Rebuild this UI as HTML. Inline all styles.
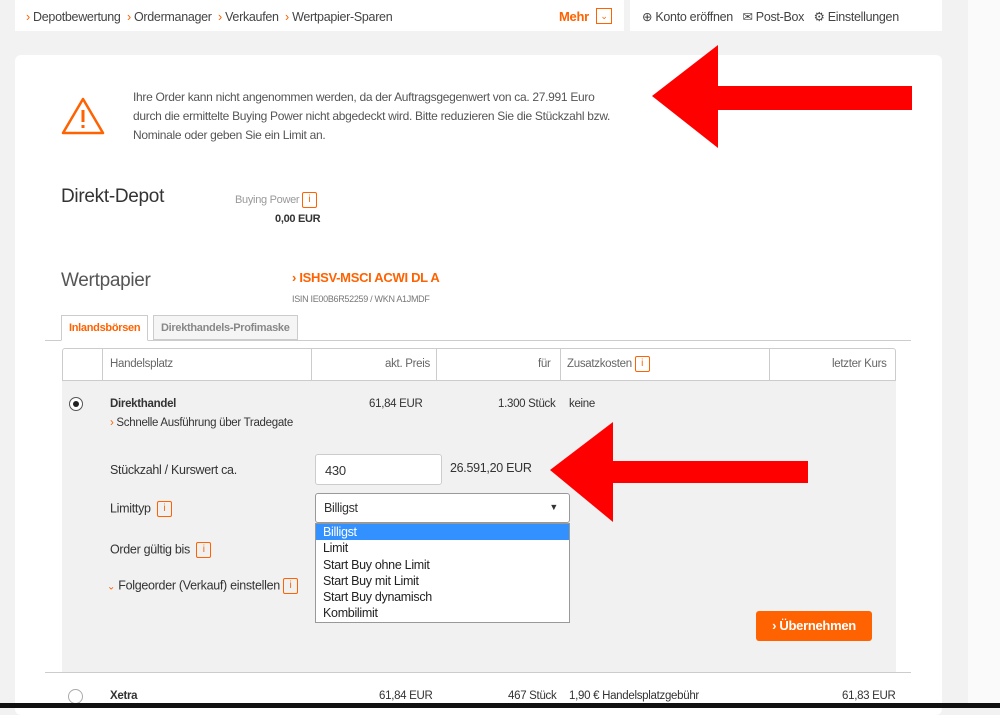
<!DOCTYPE html>
<html><head><meta charset="utf-8"><style>
*{margin:0;padding:0;box-sizing:border-box}
body{width:1000px;height:708px;overflow:hidden;background:#f2f2f2;font-family:"Liberation Sans",sans-serif;color:#333;position:relative;font-size:12px;letter-spacing:-0.3px}
.a{position:absolute;white-space:nowrap}
.o{color:#ff6200}
.i{display:inline-block;width:15px;height:16px;border:1px solid #ff6200;color:#ff6200;font-size:10px;line-height:14px;text-align:center;border-radius:2px;vertical-align:middle;letter-spacing:0}
</style></head><body>
<div class="a" style="left:968px;top:0;width:32px;height:708px;background:#fafafa"></div>
<div class="a" style="left:15px;top:0;width:609px;height:31px;background:#fff"></div>
<div class="a" style="left:630px;top:0;width:312px;height:31px;background:#fff"></div>
<div class="a" style="left:26px;top:10px;font-size:12.5px;color:#444"><span class="o">›</span> Depotbewertung &nbsp;<span class="o">›</span> Ordermanager &nbsp;<span class="o">›</span> Verkaufen &nbsp;<span class="o">›</span> Wertpapier-Sparen</div>
<div class="a o" style="left:559px;top:9px;font-size:13px;font-weight:bold">Mehr</div>
<div class="a" style="left:596px;top:8px;width:16px;height:16px;border:1px solid #ff6200;color:#ff6200;font-size:9px;text-align:center;line-height:14px">⌄</div>
<div class="a" style="left:642px;top:9px;font-size:12.5px;color:#444">⊕ Konto eröffnen &nbsp; ✉ Post-Box &nbsp; ⚙ Einstellungen</div>
<div class="a" style="left:15px;top:55px;width:927px;height:660px;background:#fff;border-radius:6px"></div>
<svg class="a" style="left:60px;top:96px" width="46" height="40"><path d="M23 3 L43 37 L3 37 Z" fill="none" stroke="#ff6200" stroke-width="2.5" stroke-linejoin="round"/><path d="M23 14v12M23 29v3" stroke="#ff6200" stroke-width="3"/></svg>
<div class="a" style="left:133px;top:88px;font-size:12px;line-height:19px;color:#555">Ihre Order kann nicht angenommen werden, da der Auftragsgegenwert von ca. 27.991 Euro<br>durch die ermittelte Buying Power nicht abgedeckt wird. Bitte reduzieren Sie die Stückzahl bzw.<br>Nominale oder geben Sie ein Limit an.</div>
<div class="a" style="left:61px;top:186px;font-size:19px;color:#333">Direkt-Depot</div>
<div class="a" style="left:235px;top:192px;font-size:11px;color:#999">Buying Power <span class="i">i</span></div>
<div class="a" style="left:275px;top:213px;font-size:11px;font-weight:bold">0,00 EUR</div>
<div class="a" style="left:61px;top:270px;font-size:19px;color:#555">Wertpapier</div>
<div class="a o" style="left:292px;top:270px;font-size:13px;font-weight:bold">› ISHSV-MSCI ACWI DL A</div>
<div class="a" style="left:292px;top:294px;font-size:9px;color:#777">ISIN IE00B6R52259 / WKN A1JMDF</div>
<div class="a" style="left:45px;top:340px;width:866px;height:1px;background:#ccc"></div>
<div class="a o" style="left:61px;top:315px;width:87px;height:26px;border:1px solid #ccc;border-bottom:1px solid #fff;background:#fff;font-size:11px;font-weight:bold;padding:6px 7px">Inlandsbörsen</div>
<div class="a" style="left:153px;top:315px;width:145px;height:25px;border:1px solid #ccc;background:#f5f5f5;font-size:11px;font-weight:bold;color:#888;padding:6px 7px">Direkthandels-Profimaske</div>
<div class="a" style="left:62px;top:348px;width:834px;height:33px;border:1px solid #ccc;border-radius:3px 3px 0 0;background:#fff"></div>
<div class="a" style="left:102px;top:348px;width:1px;height:33px;background:#ccc"></div>
<div class="a" style="left:311px;top:348px;width:1px;height:33px;background:#ccc"></div>
<div class="a" style="left:436px;top:348px;width:1px;height:33px;background:#ccc"></div>
<div class="a" style="left:560px;top:348px;width:1px;height:33px;background:#ccc"></div>
<div class="a" style="left:769px;top:348px;width:1px;height:33px;background:#ccc"></div>
<div class="a" style="left:110px;top:358px;color:#666;font-size:11.5px">Handelsplatz</div>
<div class="a" style="left:385px;top:358px;color:#666;font-size:11.5px">akt. Preis</div>
<div class="a" style="left:538px;top:358px;color:#666;font-size:11.5px">für</div>
<div class="a" style="left:567px;top:356px;color:#666;font-size:11.5px">Zusatzkosten <span class="i">i</span></div>
<div class="a" style="left:832px;top:358px;color:#666;font-size:11.5px">letzter Kurs</div>
<div class="a" style="left:62px;top:381px;width:834px;height:292px;background:#f1f1f1"></div>
<div class="a" style="left:45px;top:672px;width:866px;height:1px;background:#ccc"></div>
<div class="a" style="left:69px;top:397px;width:14px;height:14px;border:1px solid #555;border-radius:50%;background:#fff"></div>
<div class="a" style="left:73px;top:401px;width:6px;height:6px;border-radius:50%;background:#222"></div>
<div class="a" style="left:110px;top:398px;font-weight:bold;font-size:11.5px">Direkthandel</div>
<div class="a" style="left:110px;top:417px;font-size:11.5px"><span class="o">›</span> Schnelle Ausführung über Tradegate</div>
<div class="a" style="left:369px;top:398px;font-size:11.5px">61,84 EUR</div>
<div class="a" style="left:498px;top:398px;font-size:11.5px">1.300 Stück</div>
<div class="a" style="left:569px;top:398px;font-size:11.5px">keine</div>
<div class="a" style="left:110px;top:463px;font-size:12.5px">Stückzahl / Kurswert ca.</div>
<div class="a" style="left:315px;top:454px;width:127px;height:31px;border:1px solid #ccc;border-radius:3px;background:#fff;font-size:13px;padding:8px 9px">430</div>
<div class="a" style="left:450px;top:461px;font-size:12.5px">26.591,20 EUR</div>
<div class="a" style="left:110px;top:501px;font-size:12.5px">Limittyp &nbsp;<span class="i">i</span></div>
<div class="a" style="left:315px;top:493px;width:255px;height:30px;border:1px solid #999;border-radius:3px;background:#fff;font-size:12.5px;padding:7px 8px">Billigst<span style="position:absolute;right:11px;top:8px;font-size:9px">▼</span></div>
<div class="a" style="left:315px;top:523px;width:255px;height:100px;border:1px solid #999;background:#fff;font-size:12.5px;line-height:16.3px;color:#222">
<div style="background:#3390ff;color:#fff;padding-left:7px">Billigst</div><div style="padding-left:7px">Limit</div><div style="padding-left:7px">Start Buy ohne Limit</div><div style="padding-left:7px">Start Buy mit Limit</div><div style="padding-left:7px">Start Buy dynamisch</div><div style="padding-left:7px">Kombilimit</div></div>
<div class="a" style="left:110px;top:542px;font-size:12.5px">Order gültig bis &nbsp;<span class="i">i</span></div>
<div class="a" style="left:107px;top:578px;font-size:12.5px"><span class="o" style="font-size:10px">⌄</span> Folgeorder (Verkauf) einstellen <span class="i">i</span></div>
<div class="a" style="left:756px;top:611px;width:116px;height:30px;background:#ff6200;border-radius:3px;color:#fff;font-weight:bold;font-size:13px;text-align:center;line-height:30px">› Übernehmen</div>
<div class="a" style="left:68px;top:689px;width:15px;height:15px;border:1px solid #aaa;border-radius:50%;background:#fff"></div>
<div class="a" style="left:110px;top:690px;font-weight:bold;font-size:11.5px">Xetra</div>
<div class="a" style="left:379px;top:690px;font-size:11.5px">61,84 EUR</div>
<div class="a" style="left:508px;top:690px;font-size:11.5px">467 Stück</div>
<div class="a" style="left:569px;top:690px;font-size:11.5px">1,90 € Handelsplatzgebühr</div>
<div class="a" style="left:842px;top:690px;font-size:11.5px">61,83 EUR</div>
<svg class="a" style="left:0;top:0" width="1000" height="708"><path d="M652 96 L718 45 L718 86 L912 86 L912 110 L718 110 L718 148 Z" fill="#f00"/><path d="M550 470 L613 422 L613 461 L808 461 L808 483 L613 483 L613 522 Z" fill="#f00"/></svg>
<div class="a" style="left:0;top:703px;width:1000px;height:5px;background:#111"></div>
</body></html>
